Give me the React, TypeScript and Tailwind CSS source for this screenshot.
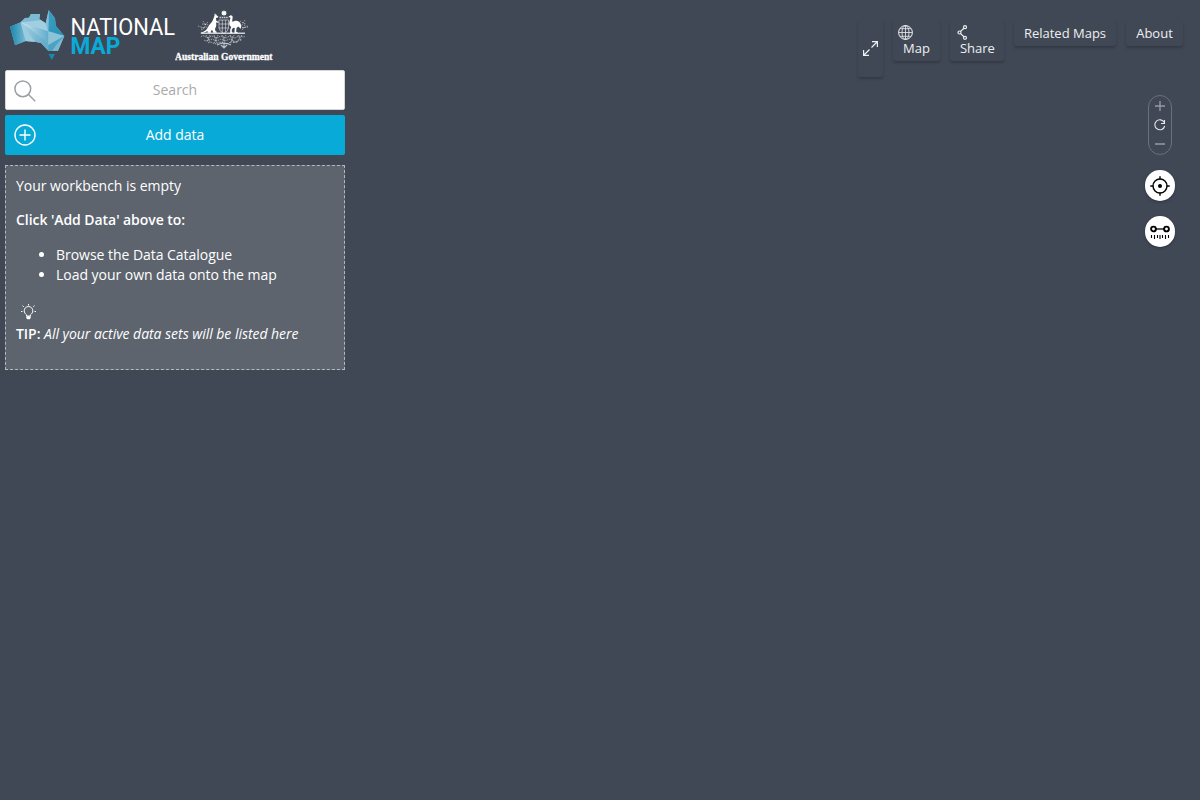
import React from "react";

function AustraliaMark() {
  return (
    <svg width="56" height="52" viewBox="0 0 56 52" className="shrink-0">
      <defs>
        <linearGradient id="west" x1="0" x2="1">
          <stop offset="0" stopColor="#1487ad" />
          <stop offset="1" stopColor="#78b9d4" />
        </linearGradient>
        <linearGradient id="mid" x1="0" x2="1">
          <stop offset="0" stopColor="#cfe7f2" />
          <stop offset="1" stopColor="#62acca" />
        </linearGradient>
        <linearGradient id="south" x1="0" x2="1" y1="0" y2="0.4">
          <stop offset="0" stopColor="#a9d3e5" />
          <stop offset="1" stopColor="#65adca" />
        </linearGradient>
        <linearGradient id="east" x1="0" x2="1" y1="0" y2="1">
          <stop offset="0" stopColor="#3c9fc1" />
          <stop offset="1" stopColor="#2791b5" />
        </linearGradient>
      </defs>
      <path d="M10.700 12.300L15 8l4-.3L21 4l9 0-.7 5 6.400 4.300L38.700 0 45 8.300l.7 7.400 8.600 10.300-6.300 14.700h-9.700L31 33l-6-1.300-9.300-.7L5 35 0 16.700z" fill="#78b9d4" />
      <path d="M0 16.700l10.700-4.400 5 18.700L5 35z" fill="url(#west)" />
      <path d="M10.700 12.300L15 8l4-.3L21 4l9 0-.7 5 6.400 4.300.3 5z" fill="#7dbbd4" />
      <path d="M10.700 12.300l20-2 5 3 2.700 9z" fill="#a2cee1" />
      <path d="M10.700 12.300l27.600 9V33z" fill="url(#mid)" />
      <path d="M10.700 12.300L38.300 33v7.700L31 33l-6-1.300-9.300-.7z" fill="url(#south)" />
      <path d="M10.700 12.300L25 31.700l-9.300-.7z" fill="#9bcbdf" />
      <path d="M38.700 0L45 8.300l.7 7.400 8.600 10.300-16-4.700z" fill="url(#east)" />
      <path d="M35.700 13.300L38.700 0l-.4 21.300z" fill="#81bfd8" />
      <path d="M38.300 21.300l16 4.700-16 9z" fill="#8cc3d9" />
      <path d="M38.300 35l16-9-9 10-2 4.700h-5z" fill="#4ba2c3" />
      <path d="M54.300 26L48 40.700h-6z" fill="#7ab8d1" />
      <path d="M38.500 44h6.500l-3.200 6z" fill="#168bae" />
    </svg>
  );
}

function CoatOfArms() {
  return (
    <svg width="52" height="40" viewBox="0 0 52 40" fill="none" stroke="#fff">
      <path d="M27 0l.7 1.400 1.600-.5-.5 1.500 1.300.7-1.300.7.5 1.500-1.600-.5L27 6.200l-.7-1.400-1.600.5.500-1.500-1.300-.7 1.300-.7-.5-1.500 1.600.5z" fill="#fff" stroke="none" />
      <path d="M22.500 7.500h9" strokeWidth="1.500" strokeDasharray="1.600 .6" opacity=".7" />
      <path d="M22 10h9.500v8q0 3-4.700 5.500-4.800-2.500-4.800-5.500zM22 14h9.500M22 18h9.500M25.300 10v12M28.600 10v12" strokeWidth="1" opacity=".5" />
      <path d="M17.600 5.500l-.3-2.300 1.100 1.600.5-1.300.6 1.700 1.800 1.300-.4 1-2 .4.500 3 2.400.8-.3 1-2.500-.2c.6 2.600.2 4.700-1 6.200l.4 2.300 1.300.7v1h-3.200l-1.500-3-1.300 2 .3 1h-3.200l-.3-1.600C8 22.600 5 23.200 2.500 23.300c4-1.300 7-2.700 8.300-5.800 1.200-3 3.900-4.700 4.900-7z" fill="#fff" stroke="none" />
      <path d="M31.500 6.800l2-1.600 1.700.6.500 1.300-.6 4.200c.5.600 1.400.2 2.200-.3 3.200-.8 5.700.7 6.500 3.200.5 1.800.4 3.300 0 4.500l-2.600-2.300-1.700 1.500-.3 4 1.600.5v.9h-3.400l.4-5.300-1.600-.2-1.400 1.700v2.800l1 .4v.6h-2.700l.2-4 1-2.300c-2-1.100-2.600-3.400-1.600-6.200l.8-3z" fill="#fff" stroke="none" />
      <path d="M4 23.300h44" strokeWidth="1.400" opacity=".75" />
      <path d="M4 20c4-1 4-4 5-7M1 16l6 2M6 11l2 4 3-3M5 14l7 1M4 18l7-1M45 20c2-2 3-4 3-7M51 16l-5 2-2-3M48 10l-3 5M43 11l5 3M45 18l6-1" strokeWidth="1" strokeDasharray="1.500 .9" opacity=".45" />
      <path d="M4 27c3-4 6 3 9 0s6 3 9 0 6 3 9 0 6 3 9 0 6 2 8-1M7 30c4 3 6-3 10 0s6-3 9 0 6-3 9 0 6 1 10-1M11 33c4-3 6 3 10 0s8 3 11 0 5 1 9-1M9 25l4 7M13 25l-3 7M17 25l3 8M21 25l-4 9M25 25l3 7M29 25l-4 8M33 25l4 8M37 25l-4 9M41 25l3 6M45 25l-5 7" strokeWidth="1" strokeDasharray="1.600 .8" opacity=".5" />
      <path d="M20 35c2-1 4-2 7-2s5 1 7 2M24 35l3 3 3-3M27 33v5" strokeWidth="1.200" opacity=".65" />
    </svg>
  );
}

function Logos() {
  return (
    <div className="flex h-[70px] pl-[5px] pt-[10px]">
      <AustraliaMark />
      <svg width="110" height="50" viewBox="0 0 110 50" className="shrink-0" fontFamily="Roboto, sans-serif">
        <text x="4.500" y="24.500" fontSize="24.500" fill="#fff" textLength="104.500" lengthAdjust="spacingAndGlyphs">NATIONAL</text>
        <text x="4.500" y="43.500" fontSize="23" fontWeight="700" fill="#08abd8" textLength="50" lengthAdjust="spacingAndGlyphs">MAP</text>
      </svg>
      <div className="-ml-px flex w-[104px] flex-col items-start">
        <div className="ml-[22px] h-10"><CoatOfArms /></div>
        <svg width="104" height="16" viewBox="0 0 104 16" className="-mt-px">
          <text x="0" y="10.500" fontSize="10.500" fontWeight="700" fontFamily="'Liberation Serif', serif" fill="#fff" stroke="#fff" strokeWidth=".3" textLength="97.500" lengthAdjust="spacingAndGlyphs">Australian Government</text>
        </svg>
      </div>
    </div>
  );
}

const menuButton = "rounded-[3px] text-[13px] text-[#eeeff0] shadow-[0_2px_3px_rgba(0,0,0,0.22)]";

function TopMenu() {
  return (
    <nav className="flex items-start gap-[10px] pt-[20px]">
      <button aria-label="Full screen" className={menuButton + " flex h-[57px] w-[25px] items-center justify-center"}>
        <svg width="15" height="15" viewBox="0 0 15 15" fill="none" stroke="currentColor" strokeWidth="1.200">
          <path d="M8.500 6.500l6-6M9 .6h5.400V6M6.500 8.500l-6 6M.6 9v5.400H6" />
        </svg>
      </button>
      <button className={menuButton + " flex h-[41px] w-[47px] flex-col items-start pl-[5px] pt-[5px]"}>
        <svg width="15" height="15" viewBox="0 0 15 15" fill="none" stroke="currentColor">
          <circle cx="7.500" cy="7.500" r="6.900" />
          <ellipse cx="7.500" cy="7.500" rx="3.500" ry="6.900" strokeWidth=".8" />
          <path d="M7.500.6v13.800M.6 7.500h13.800M2 3.700h11M2 11.300h11" strokeWidth=".8" />
        </svg>
        <span className="ml-[5px] leading-[17px]">Map</span>
      </button>
      <button className={menuButton + " flex h-[41px] w-[54px] flex-col items-start pl-[5px] pt-[5px]"}>
        <svg width="15" height="15" viewBox="0 0 15 15" fill="none" stroke="currentColor" strokeWidth="1.200">
          <circle cx="10" cy="2.200" r="1.500" />
          <circle cx="4.500" cy="7.500" r="1.500" />
          <circle cx="10" cy="12.800" r="1.500" />
          <path d="M8.900 3.300L5.600 6.400M5.600 8.600l3.300 3.100" />
        </svg>
        <span className="ml-[5px] leading-[17px] tracking-[-0.03px]">Share</span>
      </button>
      <button className={menuButton + " h-[26px] w-[102px] whitespace-nowrap leading-[26px]"}>Related Maps</button>
      <button className={menuButton + " h-[26px] w-[57px] leading-[26px]"}>About</button>
    </nav>
  );
}

const roundButton = "flex h-[31px] w-[30px] items-center justify-center rounded-full bg-white shadow-[0_1px_3px_rgba(0,0,0,0.3)]";

function MapTools() {
  return (
    <div className="mr-2 flex w-[30px] flex-col items-center pt-[18px]">
      <svg width="24" height="60" viewBox="0 0 24 60" fill="none">
        <rect x=".5" y=".5" width="23" height="59" rx="11.500" stroke="#6b717b" />
        <path d="M12 6v10M7 11h10M7 49h10" stroke="#9599a1" strokeWidth="1.400" />
        <path d="M16.300 27.500a5 5 0 1 0 .4 3.500M16.500 25v3.500H13" stroke="#e5e6e8" strokeWidth="1.100" />
      </svg>
      <button aria-label="Locate" className={roundButton + " mt-[15px]"}>
        <svg width="20" height="21" viewBox="0 0 20 21" fill="none" stroke="#000" strokeWidth="1.400">
          <circle cx="10" cy="11" r="7" />
          <circle cx="10" cy="11" r="2" fill="#000" stroke="none" />
          <path d="M10 1.300v3M10 17.700v3M.3 11h3M16.700 11h3" />
        </svg>
      </button>
      <button aria-label="Measure" className={roundButton + " mt-[15px]"}>
        <svg width="20" height="17" viewBox="0 0 20 17" fill="none" stroke="#000">
          <circle cx="3.500" cy="6" r="2.400" strokeWidth="1.900" />
          <circle cx="16.500" cy="6" r="2.400" strokeWidth="1.900" />
          <path d="M6 6h8" strokeWidth="1.300" />
          <path d="M1.500 12v3M4.500 12v4M7.500 12v3M10 12v4M12.500 12v3M15.500 12v4M18.500 12v3" strokeWidth="1.100" />
        </svg>
      </button>
    </div>
  );
}

function Workbench() {
  return (
    <section className="mt-[10px] h-[205px] border border-dashed border-[#b5b8bd] bg-[#5d646e] px-[10px] pt-[10px] text-[14px] leading-[20px] tracking-[-0.035px] text-white">
      <p>Your workbench is empty</p>
      <p className="mt-[14px] font-semibold tracking-[-0.06px]">Click &#39;Add Data&#39; above to:</p>
      <ul className="mt-[15px] list-disc pl-10">
        <li>Browse the Data Catalogue</li>
        <li>Load your own data onto the map</li>
      </ul>
      <svg className="ml-[5px] mt-[19px]" width="15" height="16" viewBox="0 0 15 16" fill="none" stroke="#fff">
        <path d="M5.500 12v-1.200C4.500 9.800 3.200 8.800 3.200 6.800a4.300 4.300 0 0 1 8.600 0c0 2-1.300 3-2.300 4V12z" />
        <path d="M5.300 12.300h4.400v1.800L8.700 15.300H6.300l-1-1.200z" fill="#fff" stroke="none" />
        <path d="M7.500 0v1.500M0 7.500h1.500M13.500 7.500H15M1.500 1.600l1.300 1.300M13.500 1.600l-1.300 1.300" />
      </svg>
      <p className="mt-[4px]"><b className="font-semibold">TIP:</b> <i>All your active data sets will be listed here</i></p>
    </section>
  );
}

export default function App() {
  return (
    <div className="flex h-screen w-full justify-between overflow-hidden bg-[#414855] font-['Open_Sans',sans-serif]">
      <aside className="w-[350px] px-[5px]">
        <Logos />
        <div className="relative h-10 rounded-[2px] border border-[#d5d6d8] bg-white">
          <input placeholder="Search" aria-label="Search" className="block h-[37px] w-full bg-transparent text-center text-[14px] outline-none placeholder:text-[#aaaaaa]" />
          <svg className="pointer-events-none absolute left-[8px] top-[9px]" width="22" height="22" viewBox="0 0 22 22" fill="none" stroke="#9aa0a6" strokeWidth="1.500">
            <circle cx="8.800" cy="8.800" r="7.900" />
            <path d="M14.500 14.500l6.700 6.700" />
          </svg>
        </div>
        <button className="relative mt-[5px] block h-10 w-full rounded-[2px] bg-[#08abd8] pb-[2px] text-[14px] text-white">
          <svg className="absolute left-[9px] top-[9px]" width="22" height="22" viewBox="0 0 22 22" fill="none" stroke="#fff" strokeWidth="1.400">
            <circle cx="11" cy="11" r="10" />
            <path d="M11 5.500v11M5.500 11h11" />
          </svg>
          Add data
        </button>
        <Workbench />
      </aside>
      <div className="flex flex-col items-end pr-[17px]">
        <TopMenu />
        <MapTools />
      </div>
    </div>
  );
}
